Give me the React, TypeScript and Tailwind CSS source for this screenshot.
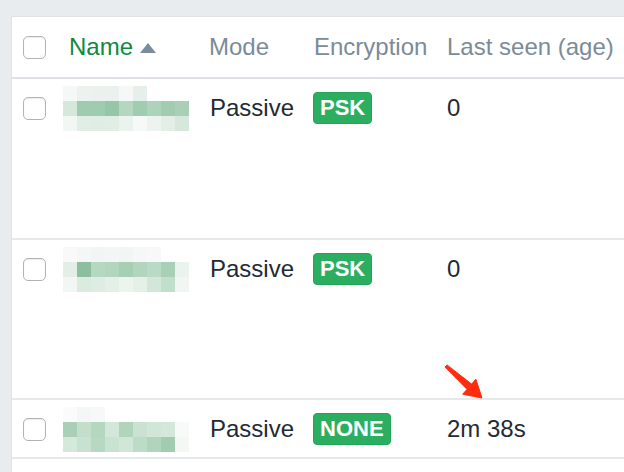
import type { ReactNode } from 'react';

// pixelated stand-ins for the blurred names
const mosaics: string[][] = [
  [
    'bg-[#f6f8f7]', 'bg-[#ecf2ee]', 'bg-[#ebf2ed]', 'bg-[#ebf2ed]', 'bg-[#f6f8f7]', 'bg-[#e6efe9]', 'bg-white', 'bg-white', 'bg-white',
    'bg-[#d6e8dc]', 'bg-[#9fcbaf]', 'bg-[#9fcbaf]', 'bg-[#96c6a8]', 'bg-[#b3d7c0]', 'bg-[#a0ccb0]', 'bg-[#aed3bb]', 'bg-[#a0ccb0]', 'bg-[#a9d0b7]',
    'bg-[#f3f7f4]', 'bg-[#e1eee5]', 'bg-[#dfede4]', 'bg-[#e0eee5]', 'bg-[#ebf3ee]', 'bg-[#f7f9f8]', 'bg-[#edf4ef]', 'bg-[#e2eee6]', 'bg-[#d6e8dc]',
  ],
  [
    'bg-[#f8f9f8]', 'bg-[#f5f7f6]', 'bg-[#f2f5f3]', 'bg-[#f4f6f5]', 'bg-[#f2f5f3]', 'bg-[#f6f8f7]', 'bg-[#f7f8f7]', 'bg-white', 'bg-white',
    'bg-[#e3eee6]', 'bg-[#8dbf9f]', 'bg-[#b5d8c1]', 'bg-[#b1d5be]', 'bg-[#a6cfb4]', 'bg-[#b1d5be]', 'bg-[#b9dac4]', 'bg-[#a8d0b6]', 'bg-[#eaf3ed]',
    'bg-[#f3f7f4]', 'bg-[#dbebe0]', 'bg-[#deede3]', 'bg-[#e3efe7]', 'bg-[#ecf4ee]', 'bg-[#e4f0e8]', 'bg-[#d2e6d9]', 'bg-[#c2dfcb]', 'bg-[#f1f6f2]',
  ],
  [
    'bg-[#fafbfa]', 'bg-[#f5f7f6]', 'bg-[#f7f9f8]', 'bg-white', 'bg-white', 'bg-white', 'bg-white', 'bg-white', 'bg-white',
    'bg-[#a9d0b6]', 'bg-[#c3dfcc]', 'bg-[#b4d7c0]', 'bg-[#d3e7da]', 'bg-[#b0d4bc]', 'bg-[#c9e2d1]', 'bg-[#d0e6d7]', 'bg-[#d3e7da]', 'bg-[#f8faf9]',
    'bg-[#d5e8dc]', 'bg-[#c8e1d0]', 'bg-[#b7d9c2]', 'bg-[#cae2d2]', 'bg-[#d0e6d7]', 'bg-[#bcdcc7]', 'bg-[#b0d4bc]', 'bg-[#a1ccb0]', 'bg-[#f4f8f5]',
  ],
];

const rows = [
  { mode: 'Passive', enc: 'PSK', seen: '0', h: 'h-[161px]' },
  { mode: 'Passive', enc: 'PSK', seen: '0', h: 'h-[160px]' },
  { mode: 'Passive', enc: 'NONE', seen: '2m 38s', h: 'h-[59px]' },
];

const cols = 'grid grid-cols-[45px_140px_105px_133px_1fr]';

function Checkbox() {
  return (
    <span className="block w-[23px] h-[23px] rounded-[5px] border border-[#b4b4b4] bg-white shadow-[inset_0_1px_1px_rgba(0,0,0,0.08)]" />
  );
}

function Line({ children, className = '' }: { children: ReactNode; className?: string }) {
  return <div className={`flex items-center h-[32px] ${className}`}>{children}</div>;
}

export default function App() {
  return (
    <div className="relative w-[624px] h-[472px] overflow-hidden bg-[#e9ecef] pt-[16px] pl-[11px] font-['Liberation_Sans',Arial,sans-serif]">
      <div className="w-[640px] h-[480px] bg-white border-t border-l border-[#dfe3e7]">
        {/* header */}
        <div className={`${cols} h-[62px] items-center border-b-2 border-[#dee2e6] text-[24px] text-[#7b8b99]`}>
          <div className="pl-[11px]">
            <Checkbox />
          </div>
          <div className="pl-3 flex items-center gap-[7px] text-[#10893f]">
            Name
            <svg width="16" height="11" viewBox="0 0 16 11" className="mt-[2px]">
              <path d="M8 0 L16 10 L0 10 Z" fill="#7b8d9b" />
            </svg>
          </div>
          <div className="pl-3">Mode</div>
          <div className="pl-3">Encryption</div>
          <div className="pl-3 whitespace-nowrap">Last seen (age)</div>
        </div>

        {/* rows */}
        {rows.map((r, i) => (
          <div key={i} className={`${cols} ${r.h} pt-[13px] border-b-2 border-[#e6e9ec] text-[24px] text-[#1f2a35]`}>
            <Line className="pl-[11px]">
              <Checkbox />
            </Line>
            <Line className="pl-[6px]">
              <div className="grid grid-cols-[repeat(9,14px)] grid-rows-[repeat(3,15px)] shrink-0">
                {mosaics[i].map((c, j) => (
                  <span key={j} className={c} />
                ))}
              </div>
            </Line>
            <Line className="pl-[13px]">{r.mode}</Line>
            <Line className="pl-[11px]">
              <span className="inline-flex items-center h-[32px] px-[6px] rounded-[4px] border border-[#24a457] bg-[#2cae60] text-white font-bold text-[22px] leading-none">
                {r.enc}
              </span>
            </Line>
            <Line className="pl-3">{r.seen}</Line>
          </div>
        ))}
      </div>

      {/* red annotation arrow */}
      <svg className="absolute left-[440px] top-[360px]" width="50" height="45" viewBox="0 0 50 45">
        <polygon
          points="7,4.9 31.6,24.1 35.9,19.2 42,38 22.7,34.2 27,29.3 5,7.1"
          fill="#ff2d0f"
          stroke="#ff2d0f"
          strokeWidth="1"
          strokeLinejoin="round"
        />
      </svg>
    </div>
  );
}
